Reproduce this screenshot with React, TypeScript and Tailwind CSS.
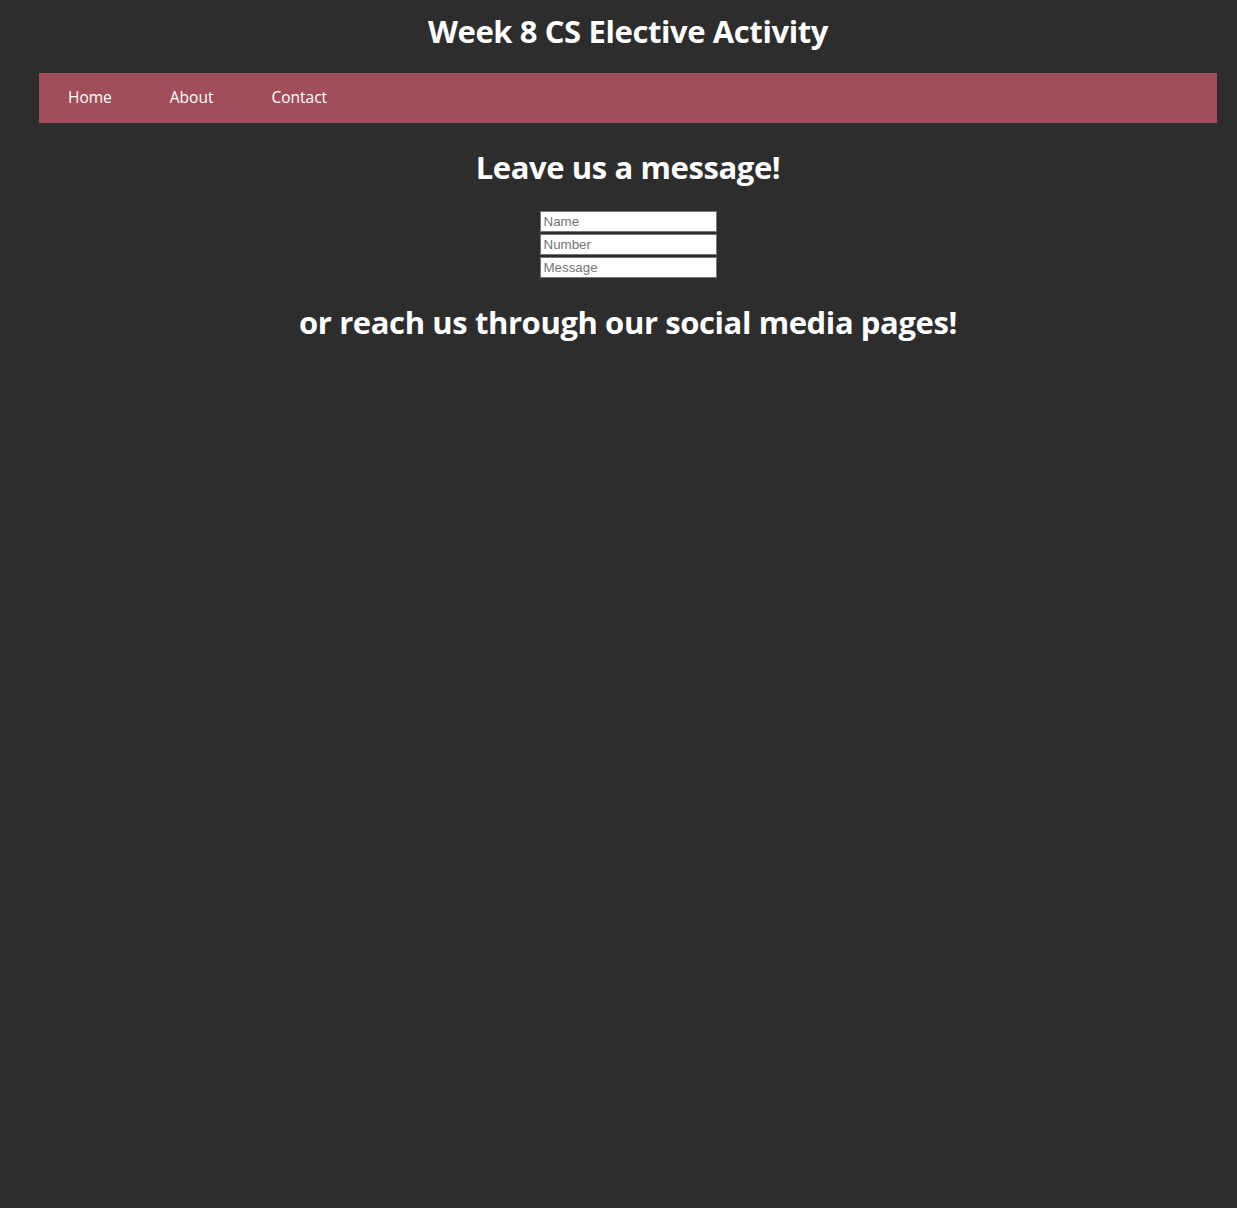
export default function App() {
  const fields = ['Name', 'Number', 'Message'];
  const heading = "text-[31px] font-bold leading-none tracking-[-0.4px]";
  return (
    <div className="min-h-screen bg-[#2d2d2d] text-white font-['Open_Sans',sans-serif]">
      <div className="ml-[39px] mr-[20px]">
        <header className="h-[62px] flex items-center justify-center">
          <h1 className={heading}>Week 8 CS Elective Activity</h1>
        </header>
        <nav className="mt-[11px] h-[50px] bg-[#a14e5a] flex items-center">
          <ul className="flex -mt-[1px]">
            <li className="px-[29px] text-[15.5px]">Home</li>
            <li className="px-[29px] text-[15.5px]">About</li>
            <li className="px-[29px] text-[15.5px]">Contact</li>
          </ul>
        </nav>
        <main className="flex flex-col items-center">
          <h2 className={`mt-[28px] h-[32px] flex items-center ${heading}`}>Leave us a message!</h2>
          <form className="mt-[28px] flex flex-col gap-[2px]">
            {fields.map((f) => (
              <input
                key={f}
                type="text"
                placeholder={f}
                className="w-[177px] h-[21px] bg-white border border-[#767676] px-[3px] text-[13.33px] text-black placeholder:text-[#757575] font-['Liberation_Sans',Arial,sans-serif] outline-none"
              />
            ))}
          </form>
          <h2 className={`mt-[28px] h-[32px] flex items-center ${heading}`}>
            or reach us through our social media pages!
          </h2>
        </main>
      </div>
    </div>
  );
}
